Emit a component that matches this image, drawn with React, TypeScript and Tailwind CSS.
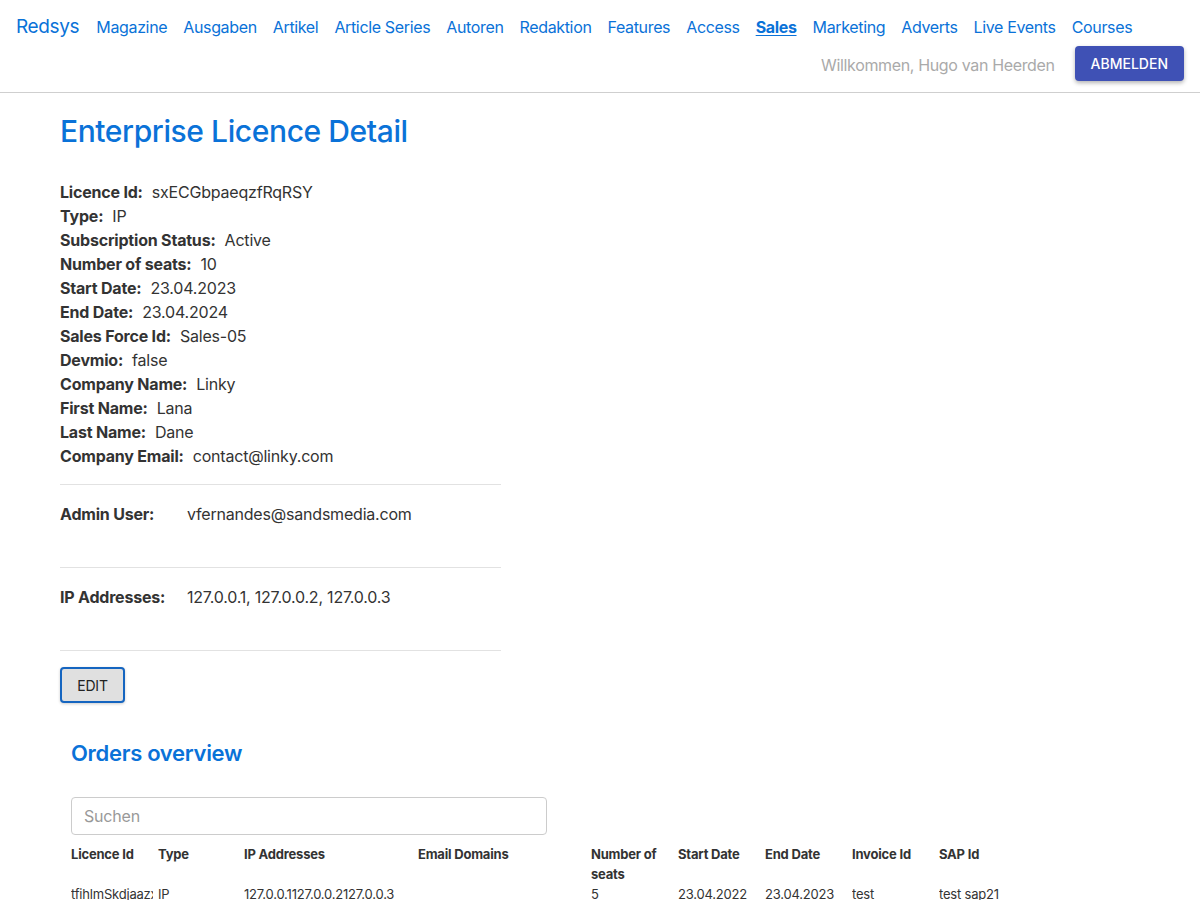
import React from "react";

const navLinks = [
  "Magazine",
  "Ausgaben",
  "Artikel",
  "Article Series",
  "Autoren",
  "Redaktion",
  "Features",
  "Access",
  "Sales",
  "Marketing",
  "Adverts",
  "Live Events",
  "Courses",
];

const details: [string, string][] = [
  ["Licence Id", "sxECGbpaeqzfRqRSY"],
  ["Type", "IP"],
  ["Subscription Status", "Active"],
  ["Number of seats", "10"],
  ["Start Date", "23.04.2023"],
  ["End Date", "23.04.2024"],
  ["Sales Force Id", "Sales-05"],
  ["Devmio", "false"],
  ["Company Name", "Linky"],
  ["First Name", "Lana"],
  ["Last Name", "Dane"],
  ["Company Email", "contact@linky.com"],
];

const columns = [
  { label: "Licence Id", w: "w-[87px]" },
  { label: "Type", w: "w-[86px]" },
  { label: "IP Addresses", w: "w-[174px]" },
  { label: "Email Domains", w: "w-[173px]" },
  { label: "Number of seats", w: "w-[87px]" },
  { label: "Start Date", w: "w-[87px]" },
  { label: "End Date", w: "w-[87px]" },
  { label: "Invoice Id", w: "w-[87px]" },
  { label: "SAP Id", w: "w-[87px]" },
];

const row = [
  "tfihlmSkdjaazxyq",
  "IP",
  "127.0.0.1127.0.0.2127.0.0.3",
  "",
  "5",
  "23.04.2022",
  "23.04.2023",
  "test",
  "test sap21",
];

function Navbar() {
  return (
    <header className="h-[93px] border-b border-[#cfcfcf] px-4 tracking-[-0.35px]">
      <div className="flex items-center h-[46px] pt-[8px]">
        <span className="text-[19px] text-[#0a72d8] mr-[17px]">Redsys</span>
        <nav className="flex gap-x-[16px]">
          {navLinks.map((l) => (
            <a
              key={l}
              className={
                l === "Sales"
                  ? "text-[16px] text-[#0a72d8] font-bold underline underline-offset-2"
                  : "text-[16px] text-[#0a72d8]"
              }
            >
              {l}
            </a>
          ))}
        </nav>
      </div>
      <div className="flex items-center justify-end">
        <span className="text-[16px] text-[#aaaaaa] mr-[20px] pt-[2px]">
          Willkommen, Hugo van Heerden
        </span>
        <button className="h-[35px] px-[16px] bg-[#3f51b5] text-white text-[14px] font-medium tracking-normal rounded-[4px] shadow-[0_2px_4px_rgba(0,0,0,0.3)]">
          ABMELDEN
        </button>
      </div>
    </header>
  );
}

function Section({ label, value }: { label: string; value: string }) {
  return (
    <div className="border-t border-[#e2e2e2] h-[83px] pt-[17px] flex">
      <span className="w-[127px] font-bold text-[#333]">{label}:</span>
      <span className="text-[#333]">{value}</span>
    </div>
  );
}

export default function App() {
  return (
    <div className="min-h-[900px] bg-white font-['Inter',sans-serif] text-[#333]">
      <Navbar />
      <main className="pl-[60px] pt-[18px] tracking-[-0.2px]">
        <h1 className="text-[30px] leading-[40px] text-[#0a72d8] font-medium tracking-[-0.4px]">
          Enterprise Licence Detail
        </h1>
        <div className="mt-[29px] text-[16px] leading-[24px]">
          {details.map(([k, v]) => (
            <div key={k}>
              <span className="font-bold">{k}:</span>
              <span className="ml-[9px]">{v}</span>
            </div>
          ))}
        </div>
        <div className="w-[441px] mt-[16px] text-[16px] leading-[24px]">
          <Section label="Admin User" value="vfernandes@sandsmedia.com" />
          <Section label="IP Addresses" value="127.0.0.1, 127.0.0.2, 127.0.0.3" />
          <div className="border-t border-[#e2e2e2]" />
        </div>
        <button className="mt-[16px] h-[36px] w-[65px] bg-[#e0e0e0] border-2 border-[#1565c0] rounded-[4px] text-[14px] text-[#222] shadow-[0_1px_3px_rgba(0,0,0,0.2)]">
          EDIT
        </button>
        <div className="pl-[11px]">
          <h2 className="mt-[34px] text-[22px] leading-[32px] font-semibold text-[#0a72d8] tracking-[-0.3px]">
            Orders overview
          </h2>
          <input
            placeholder="Suchen"
            className="mt-[28px] w-[476px] h-[38px] border border-[#cccccc] rounded-[4px] px-[12px] text-[16px] placeholder:text-[#999] outline-none"
          />
          <div className="mt-[9px] text-[13px] leading-[20px]">
            <div className="flex">
              {columns.map((c) => (
                <div key={c.label} className={`${c.w} font-bold pr-[8px] shrink-0`}>
                  {c.label}
                </div>
              ))}
            </div>
            <div className="flex">
              {columns.map((c, i) => (
                <div key={c.label} className={`${c.w} pr-[5px] shrink-0`}>
                  <div className="overflow-hidden whitespace-nowrap">{row[i]}</div>
                </div>
              ))}
            </div>
          </div>
        </div>
      </main>
    </div>
  );
}
